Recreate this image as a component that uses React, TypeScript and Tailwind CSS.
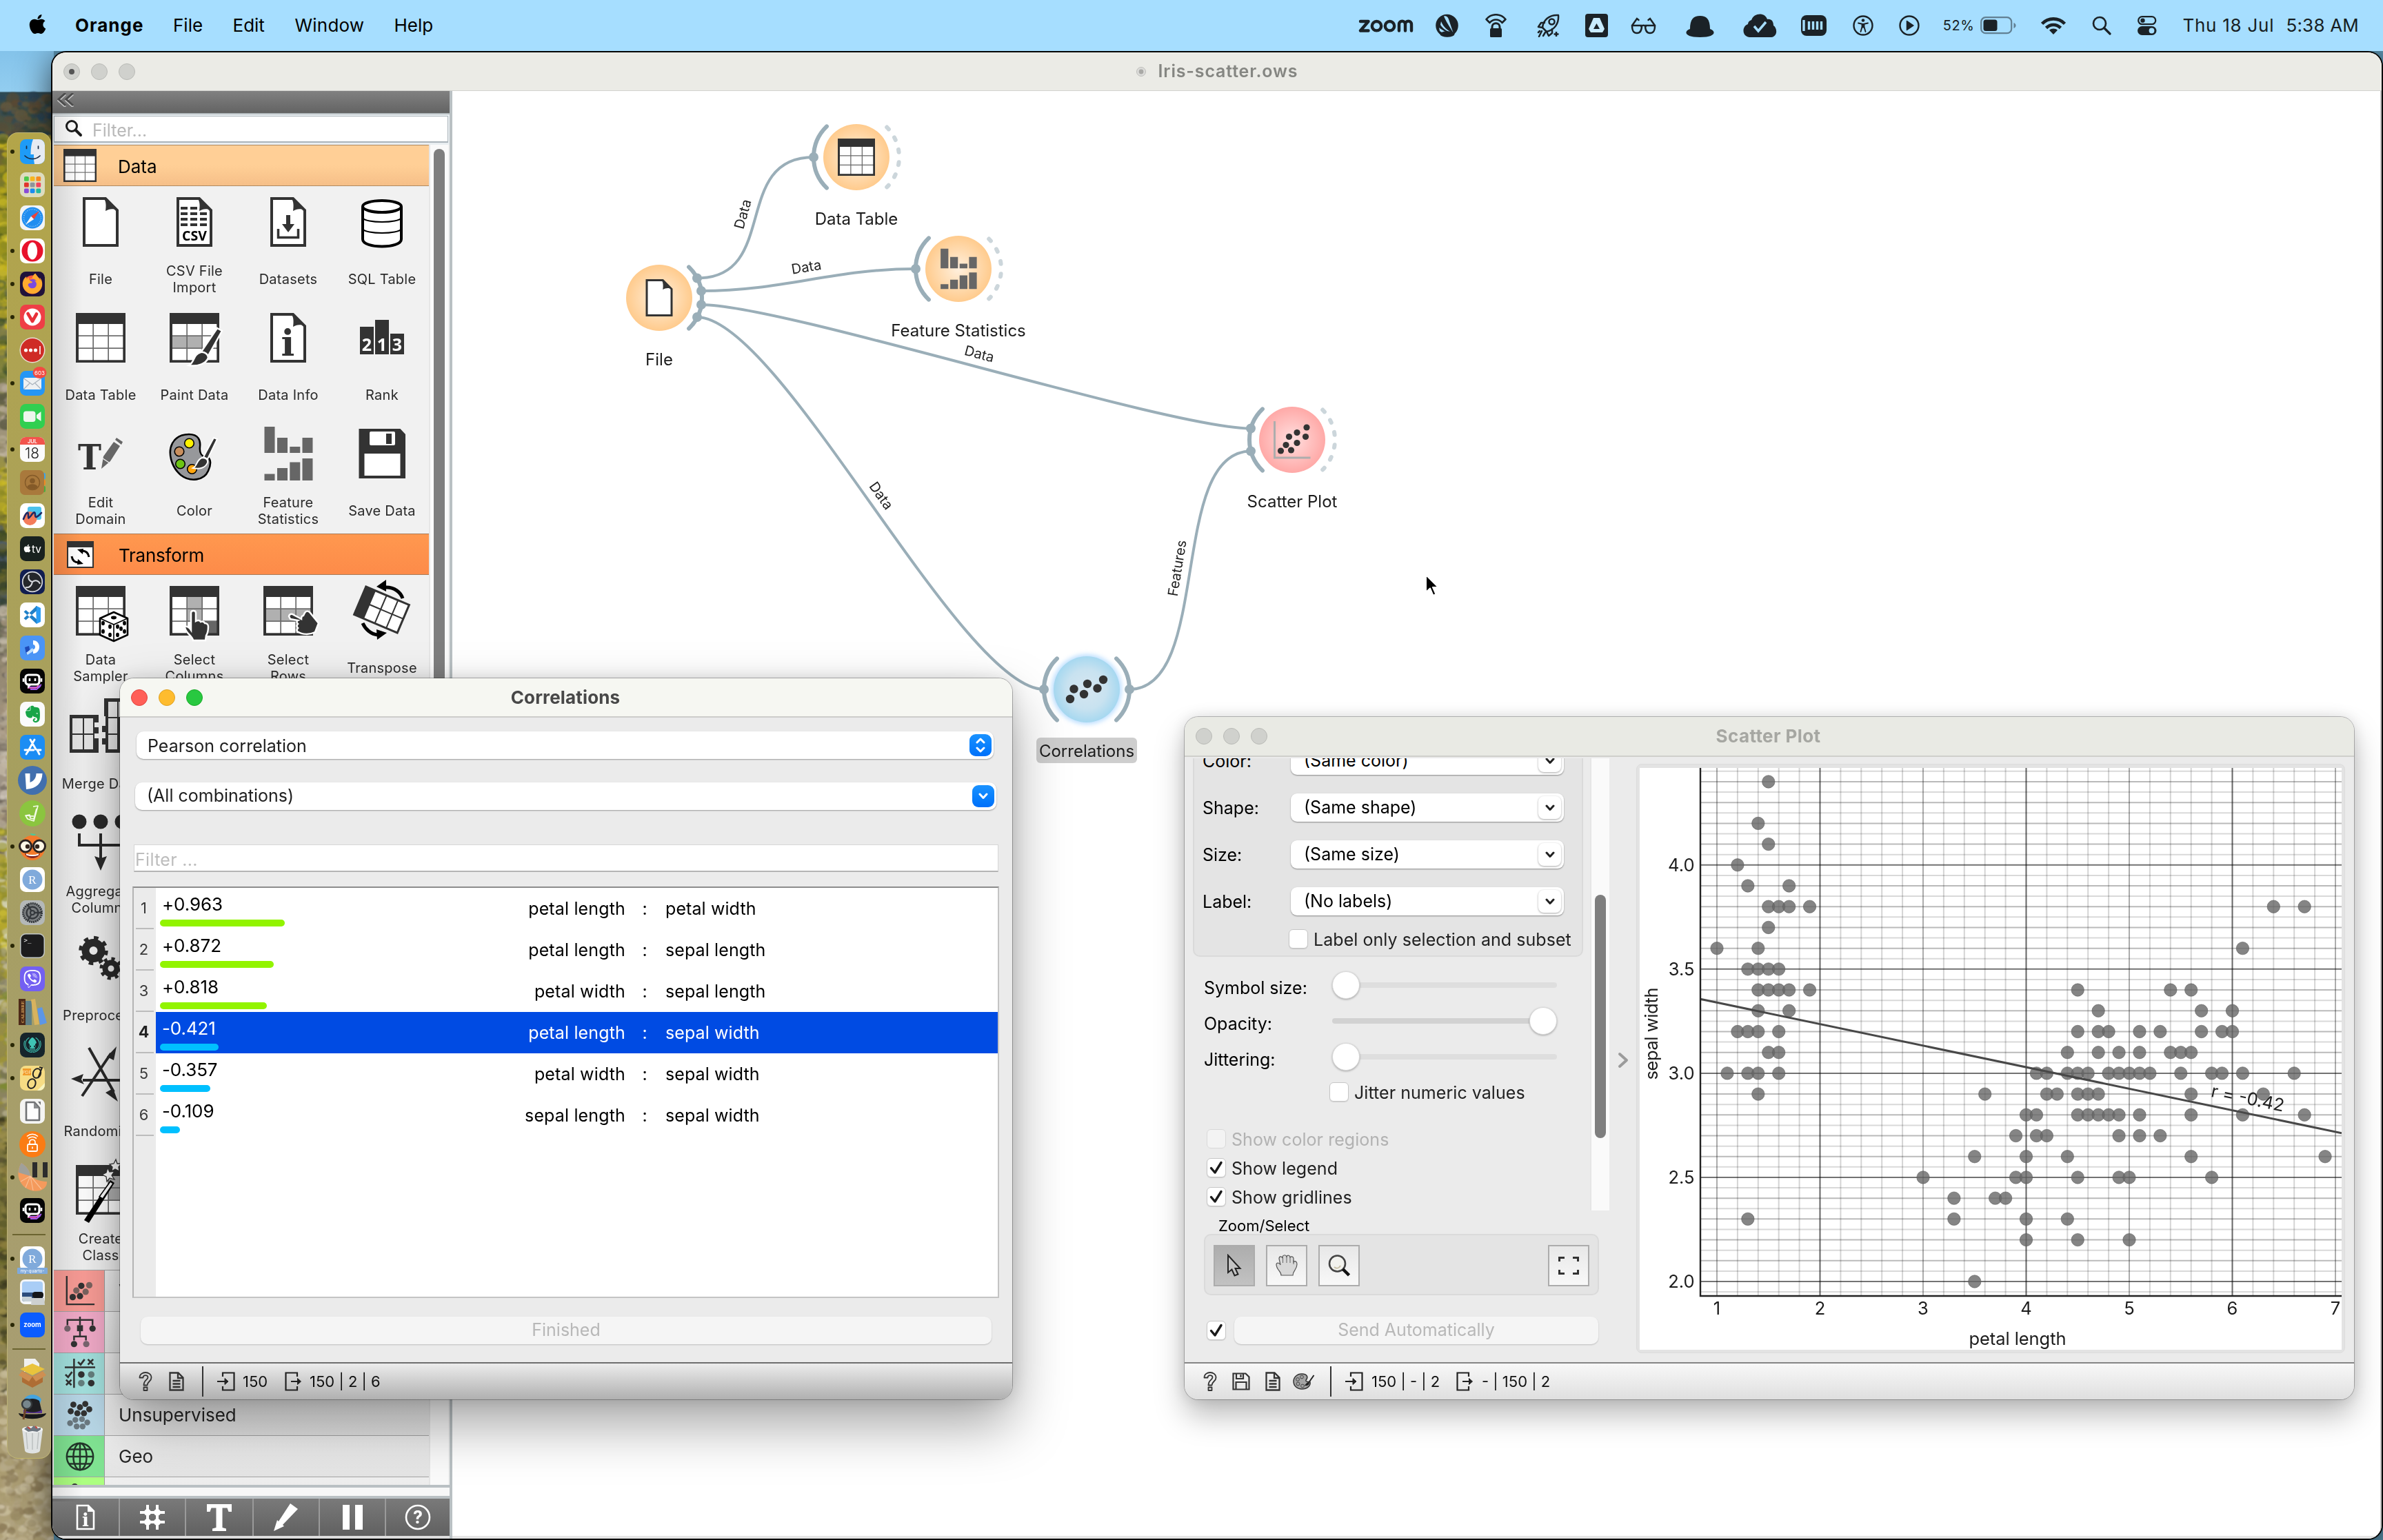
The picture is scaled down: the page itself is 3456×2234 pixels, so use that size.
import type { ReactNode } from "react";
import { FaApple, FaEvernote, FaViber, FaFirefoxBrowser, FaGitkraken } from "react-icons/fa";

const INK = "#333333";

/* ------------------------------------------------------------------ */
/* Wallpaper                                                           */
/* ------------------------------------------------------------------ */

function seeded(seed: number) {
  let s = seed;
  return () => {
    s = (s * 1664525 + 1013904223) % 4294967296;
    return s / 4294967296;
  };
}

type Band = { from: number; to: number; tones: string[] };

const bands: Band[] = [
  { from: 60, to: 130, tones: ["#3c4d3c", "#5b4a34", "#2f4038", "#6b5a3c", "#27455a"] },
  { from: 120, to: 430, tones: ["#c3b21a", "#8d8a1c", "#d6c42c", "#6b7420", "#a89c1e", "#4f5a1e"] },
  { from: 330, to: 480, tones: ["#5e6a2a", "#3d4f34", "#b5a52a", "#7c7a50"] },
  { from: 480, to: 620, tones: ["#8d8468", "#a99c8a", "#5c5a44", "#c0b4a0"] },
  { from: 600, to: 690, tones: ["#c9b824", "#8e8a22", "#6b6a2c"] },
  { from: 680, to: 820, tones: ["#2c3a30", "#3f4a24", "#4a5a70", "#6e6a2c"] },
  { from: 800, to: 1160, tones: ["#a3937c", "#8c8272", "#c2b6a4", "#6a6258", "#d0c8bc"] },
  { from: 1120, to: 1330, tones: ["#b5a82c", "#8c8a28", "#cfc034", "#dcdccc"] },
  { from: 1300, to: 1560, tones: ["#8a8468", "#a49a30", "#6d6a58", "#c4bca0", "#7e8a34"] },
  { from: 1540, to: 1960, tones: ["#6d6a28", "#8a7c3c", "#4c4c24", "#a0924c", "#77703a", "#3c3a20"] },
  { from: 1900, to: 2170, tones: ["#b4a888", "#8c7c58", "#cfc4a8", "#a89a70", "#c4b894"] },
];

function Wallpaper() {
  const rnd = seeded(41);
  const blobs: ReactNode[] = [];
  bands.forEach((b, bi) => {
    const n = Math.round((b.to - b.from) * 1.7);
    for (let i = 0; i < n; i++) {
      const r = 2 + rnd() * 8;
      blobs.push(
        <ellipse
          key={bi + "-" + i}
          cx={rnd() * 78}
          cy={b.from + 6 + rnd() * (b.to - b.from)}
          rx={r}
          ry={r * (0.4 + rnd() * 0.6)}
          fill={b.tones[Math.floor(rnd() * b.tones.length)]}
          opacity={0.35 + rnd() * 0.5}
        />,
      );
    }
  });
  return (
    <svg className="absolute left-0 top-0 h-[2160px] w-[78px]" viewBox="0 0 78 2160">
      <defs>
        <linearGradient id="wall" x1="0" y1="0" x2="0" y2="1">
          <stop offset="0" stopColor="#84c3ea" />
          <stop offset="0.027" stopColor="#92cdf0" />
          <stop offset="0.028" stopColor="#2f4a54" />
          <stop offset="0.06" stopColor="#5b5636" />
          <stop offset="0.12" stopColor="#b0a424" />
          <stop offset="0.2" stopColor="#7f8230" />
          <stop offset="0.25" stopColor="#8a8468" />
          <stop offset="0.3" stopColor="#a69c2c" />
          <stop offset="0.35" stopColor="#36422e" />
          <stop offset="0.42" stopColor="#968a74" />
          <stop offset="0.5" stopColor="#a0968a" />
          <stop offset="0.57" stopColor="#a89e30" />
          <stop offset="0.7" stopColor="#8c8450" />
          <stop offset="0.8" stopColor="#6c6830" />
          <stop offset="0.93" stopColor="#a8996c" />
          <stop offset="1" stopColor="#b0a27c" />
        </linearGradient>
        <filter id="soften">
          <feGaussianBlur stdDeviation="1.2" />
        </filter>
      </defs>
      <rect width="78" height="2160" fill="url(#wall)" />
      <g filter="url(#soften)">{blobs}</g>
    </svg>
  );
}

/* ------------------------------------------------------------------ */
/* Menu bar                                                            */
/* ------------------------------------------------------------------ */

function MenuIcon({ w, h = 34, gap, children }: { w: number; h?: number; gap: string; children: ReactNode }) {
  return (
    <svg width={w} height={h} viewBox={`0 0 ${w} ${h}`} className={"shrink-0 " + gap} fill="#1b2227">
      {children}
    </svg>
  );
}

function MenuBar() {
  return (
    <header className="flex h-[74px] items-center bg-[#a6deff] text-[26px] leading-none text-black">
      <FaApple className="mb-1 ml-[40px] h-[32px] w-[29px]" />
      <span className="ml-[40px] w-[142px] font-bold tracking-[1px]">Orange</span>
      <span className="w-[86.5px]">File</span>
      <span className="w-[90px]">Edit</span>
      <span className="w-[144px] tracking-[0.2px]">Window</span>
      <span>Help</span>
      <div className="ml-auto flex h-full items-center pr-[35px] text-[#161d22]">
        <MenuIcon w={82} gap="">
          <g fill="none" stroke="#1b2227" strokeWidth="4.400" strokeLinejoin="round" strokeLinecap="round">
            <path d="M3 11H14.500L3 24.500H14.500" />
            <circle cx="26.500" cy="17.700" r="6.700" />
            <circle cx="45.500" cy="17.700" r="6.700" />
            <path d="M59 24.500V15.500c0-6.500 9-6.500 9 0V24.500M68 15.500c0-6.500 9-6.500 9 0V24.500" />
          </g>
        </MenuIcon>
        <MenuIcon w={33} gap="ml-[30px]">
          <circle cx="16.500" cy="17" r="16.300" />
          <path d="M12 3.500c4-1 6.500 2 7.500 6l6 18C20 18 15 11 12 3.500zM8 11c3 8 9 13 17 17C17 26 11 22 7 16zM5 20c5 4 10 7 19 9-8 1-14-1-18-4z" fill="#a6deff" />
          <ellipse cx="17" cy="29.500" rx="10.500" ry="4.300" />
        </MenuIcon>
        <MenuIcon w={31} gap="ml-[39px]">
          <g fill="none" stroke="#1b2227" strokeWidth="2.600" strokeLinejoin="round">
            <path d="M1.500 8C9-1 22-1 29.500 8L24.500 13C19.500 7 11.500 7 6.500 13z" />
            <path d="M10 23v-4c0-7 11-7 11 0v4" strokeWidth="3" />
          </g>
          <rect x="7" y="21" width="17" height="13" rx="1.500" />
        </MenuIcon>
        <MenuIcon w={34} gap="ml-[44px]">
          <g fill="none" stroke="#1b2227" strokeWidth="2.500" strokeLinejoin="round" strokeLinecap="round">
            <path d="M8 20C9 9 18 1 31 2c1 12-5 21-17 24z" />
            <circle cx="21.500" cy="11.500" r="4" />
            <path d="M11 13H6L2 19l6 1M14 26l3 6 5-4v-6M7 25l-4 8M12 27l-3 5M2 27l2-2" />
            <path d="M28 26v7M24.500 29.500h7" strokeLinecap="butt" />
          </g>
        </MenuIcon>
        <MenuIcon w={33} gap="ml-[36px]">
          <rect width="33" height="34" rx="4" />
          <path d="M12 6h9l7 16-3 5H8l-3-5z" fill="#c9ecff" />
          <path d="M16.500 14l4.500 8h-9z" />
        </MenuIcon>
        <MenuIcon w={37} gap="ml-[33px]">
          <g fill="none" stroke="#1b2227" strokeWidth="2.500" strokeLinecap="round">
            <path d="M2 17L9 7l2.500 2M35 17L28 7l-2.500 2M2 17h13M22 17h13M15 18q3.500-2.500 7 0" />
            <path d="M2 17c0 8 2 11 7 11s7-4 7-11M35 17c0 8-2 11-7 11s-7-4-7-11" />
          </g>
        </MenuIcon>
        <MenuIcon w={43} gap="ml-[42px]">
          <path d="M7 22C7 8 12 3 21.500 3S36 8 36 22c9 3 9 12-14.500 12S-2 25 7 22z" />
        </MenuIcon>
        <MenuIcon w={49} gap="ml-[41px]">
          <path d="M12 9C16-2 32-2 35 8c6-1 9 3 9 9 6 4 6 16-3 17H9C-2 33-2 18 7 15c0-3 2-5 5-6z" />
          <path d="M16 18l6 7L33 12" fill="none" stroke="#a6deff" strokeWidth="3.500" />
        </MenuIcon>
        <MenuIcon w={37} gap="ml-[35px]">
          <rect y="2" width="37" height="30" rx="8" />
          <path d="M4 9v16M11.500 11v12M17.500 11v12M23.500 11v12M29.500 11v12" stroke="#a6deff" strokeWidth="3.400" />
        </MenuIcon>
        <MenuIcon w={30} h={30} gap="ml-[38px]">
          <circle cx="15" cy="15" r="13.500" fill="none" stroke="#1b2227" strokeWidth="2.400" />
          <circle cx="15" cy="7.500" r="2.300" />
          <path d="M8 11.500l5.500 1.200V17l-2 7M22 11.500l-5.500 1.200V17l2 7" fill="none" stroke="#1b2227" strokeWidth="1.900" strokeLinecap="round" strokeLinejoin="round" />
          <path d="M13 12h4v6.500h-4z" />
        </MenuIcon>
        <MenuIcon w={30} h={30} gap="ml-[37px]">
          <circle cx="15" cy="15" r="13.500" fill="none" stroke="#1b2227" strokeWidth="2.400" />
          <path d="M11.500 8.500L21 15l-9.500 6.500z" stroke="#1b2227" strokeWidth="1.500" strokeLinejoin="round" />
        </MenuIcon>
        <span className="ml-[34px] text-[20px] tracking-[0.6px]">52%</span>
        <MenuIcon w={52} h={26} gap="ml-[9px]">
          <rect x="1.200" y="1.200" width="44" height="23" rx="6.500" fill="none" stroke="#1b2227" strokeOpacity=".5" strokeWidth="2.200" />
          <rect x="4.500" y="4.500" width="20" height="16.500" rx="3.500" />
          <path d="M48.500 9c4 1.500 4 6.500 0 8z" fillOpacity=".5" />
        </MenuIcon>
        <MenuIcon w={36} h={27} gap="ml-[36px]">
          <g fill="none" stroke="#1b2227" strokeWidth="4.600">
            <path d="M1.500 10.500C10.500 1 25.500 1 34.500 10.500" />
            <path d="M7.500 16.500C13.500 10.500 22.500 10.500 28.500 16.500" />
          </g>
          <path d="M18 26l-6-6.200c3.400-3.200 8.600-3.200 12 0z" />
        </MenuIcon>
        <MenuIcon w={28} h={28} gap="ml-[38px]">
          <circle cx="11" cy="11" r="9" fill="none" stroke="#1b2227" strokeWidth="2.700" />
          <path d="M17.500 17.500L26 26" stroke="#1b2227" strokeWidth="3.200" strokeLinecap="round" />
        </MenuIcon>
        <MenuIcon w={28} h={28} gap="ml-[38px]">
          <rect x="1.200" y="1.200" width="25" height="11" rx="5.500" fill="none" stroke="#1b2227" strokeWidth="2.300" />
          <circle cx="7.500" cy="6.700" r="3.200" />
          <rect x="0" y="15" width="27.500" height="13" rx="6.500" />
          <circle cx="20.500" cy="21.500" r="3.900" fill="#a6deff" />
        </MenuIcon>
        <span className="ml-[37px] w-[150px] tracking-[0.75px]">Thu 18 Jul</span>
        <span className="tracking-[0.2px] whitespace-nowrap">5:38 AM</span>
      </div>
    </header>
  );
}

/* ------------------------------------------------------------------ */
/* Dock                                                                */
/* ------------------------------------------------------------------ */

type DockApp = { id: string; dot?: boolean; art: ReactNode };

const Tile = ({ fill }: { fill: string }) => <rect width="36" height="36" rx="8.500" fill={fill} />;

const botArt = (
  <>
    <Tile fill="#050505" />
    <path d="M12 27h14l5-4M15 30h9l6-5" stroke="#a45bf0" strokeWidth="2" fill="none" />
    <path d="M11 28h12l4-4" stroke="#f45bb8" strokeWidth="1.500" fill="none" />
    <rect x="8" y="9" width="20" height="14" rx="4" fill="none" stroke="#fff" strokeWidth="3.200" />
    <path d="M5 14v5M31 14v5M14 14v4M22 14v4" stroke="#fff" strokeWidth="2.600" />
    <path d="M11 22v7l6-6" fill="#fff" />
  </>
);

const dockTop: DockApp[] = [
  {
    id: "finder", dot: true,
    art: (
      <>
        <Tile fill="#1e9bf7" />
        <path d="M19 0h8.500A8.500 8.500 0 0 1 36 8.500v19a8.500 8.500 0 0 1-8.500 8.500H21c-1-5-1-9-1-14h-4.500C15.500 13 16.500 6 19 0z" fill="#e6ebf2" />
        <path d="M9.500 10v3.500M26.500 10v3.500M7 24c6 6 16 6 22 0" stroke="#1b2c44" strokeWidth="1.700" fill="none" strokeLinecap="round" />
      </>
    ),
  },
  {
    id: "launchpad",
    art: (
      <>
        <Tile fill="#dddcc0" />
        {["#4cc84a", "#f6b61e", "#f58b1f", "#e0342c", "#8e949a", "#f2455e", "#8a4ad8", "#1a8bf2", "#23b8a0"].map((c, i) => (
          <rect key={c} x={6 + (i % 3) * 8.7} y={6 + Math.floor(i / 3) * 8.7} width="6.800" height="6.800" rx="1.600" fill={c} />
        ))}
      </>
    ),
  },
  {
    id: "safari",
    art: (
      <>
        <Tile fill="#f2f4f6" />
        <circle cx="18" cy="18" r="15.500" fill="#1f8df0" />
        <circle cx="18" cy="18" r="12.500" fill="none" stroke="#8cc6fa" strokeWidth="1.600" strokeDasharray="1 1.800" />
        <path d="M28 8L16 15.800 20.200 20z" fill="#ee4136" />
        <path d="M8 28l12.200-8L16 15.800z" fill="#f4f6f8" />
      </>
    ),
  },
  {
    id: "opera", dot: true,
    art: (
      <>
        <Tile fill="#ffffff" />
        <ellipse cx="18" cy="18" rx="15.500" ry="15.500" fill="#e8122c" />
        <ellipse cx="18" cy="18" rx="7.200" ry="12.500" fill="#fff" />
      </>
    ),
  },
  {
    id: "firefox", dot: true,
    art: (
      <>
        <Tile fill="#20123a" />
        <circle cx="18" cy="19" r="13.500" fill="#ff5a3c" />
        <circle cx="18.500" cy="18" r="7" fill="#7a4be0" />
        <FaFirefoxBrowser x={3} y={2.5} size={30} color="#ffab2e" />
      </>
    ),
  },
  {
    id: "vivaldi", dot: true,
    art: (
      <>
        <Tile fill="#ef3e46" />
        <circle cx="18" cy="18" r="12.500" fill="#fff" />
        <path d="M11.500 13l6.500 11 6-10.500" fill="none" stroke="#e83038" strokeWidth="4.600" strokeLinecap="round" strokeLinejoin="round" />
      </>
    ),
  },
  {
    id: "passwords",
    art: (
      <>
        <circle cx="18" cy="18" r="18.500" fill="#e8dcd4" />
        <circle cx="18" cy="18" r="17" fill="#cf2b26" />
        <circle cx="8.500" cy="18" r="2.600" fill="#fff" />
        <circle cx="15.500" cy="18" r="2.600" fill="#fff" />
        <circle cx="22.500" cy="18" r="2.600" fill="#fff" />
        <path d="M29 12v12" stroke="#fff" strokeWidth="1.600" />
      </>
    ),
  },
  {
    id: "mail", dot: true,
    art: (
      <>
        <Tile fill="#2596f5" />
        <rect x="5" y="10" width="26" height="17" rx="2.500" fill="#eef0f2" />
        <path d="M5.500 11l12.500 9 12.500-9M5.500 26.500L14 18M30.500 26.500L22 18" stroke="#a9b2bc" strokeWidth="1.200" fill="none" />
        <ellipse cx="28.500" cy="2.500" rx="10" ry="8.500" fill="#f24a42" />
        <text x="28.500" y="5.500" fontSize="8" textAnchor="middle" fill="#fff">603</text>
      </>
    ),
  },
  {
    id: "facetime",
    art: (
      <>
        <Tile fill="#30cf50" />
        <rect x="5" y="10.500" width="17.500" height="15.500" rx="4" fill="#eef6ee" />
        <path d="M24 16l6.500-5v14L24 20.500z" fill="#eef6ee" />
      </>
    ),
  },
  {
    id: "calendar", dot: true,
    art: (
      <>
        <Tile fill="#fbfbfb" />
        <path d="M0 11V8.500A8.500 8.500 0 0 1 8.500 0h19A8.500 8.500 0 0 1 36 8.500V11z" fill="#f2544c" />
        <text x="18" y="8.800" fontSize="7.500" fontWeight="600" textAnchor="middle" fill="#fff">JUL</text>
        <text x="17.500" y="30.500" fontSize="21" fontWeight="300" textAnchor="middle" fill="#222">18</text>
      </>
    ),
  },
  {
    id: "contacts",
    art: (
      <>
        <rect x="30" y="4" width="7" height="9" rx="2" fill="#3ea4e8" />
        <rect x="30" y="14" width="7" height="8" rx="2" fill="#f08a24" />
        <rect x="30" y="23" width="7" height="9" rx="2" fill="#4aae40" />
        <rect width="35" height="36" rx="7" fill="#a9793c" />
        <circle cx="18" cy="18" r="10.500" fill="none" stroke="#845a28" strokeWidth="1.400" />
        <circle cx="18" cy="15.500" r="3.800" fill="#845a28" />
        <path d="M10.500 24c2-5 13-5 15 0-3 5-12 5-15 0z" fill="#845a28" />
      </>
    ),
  },
  {
    id: "freeform",
    art: (
      <>
        <Tile fill="#ffffff" />
        <rect x="11" y="5" width="20" height="19" rx="3" fill="#4bc2ec" />
        <circle cx="14.500" cy="22" r="10" fill="#f47c5a" />
        <path d="M5 23c4-10 7-12 7-6 0 6 0 6 4 1 4-6 6-6 6-1 0 6 4 2 9-3" stroke="#1c2a66" strokeWidth="2.600" fill="none" strokeLinecap="round" />
      </>
    ),
  },
  {
    id: "tv",
    art: (
      <>
        <Tile fill="#18211f" />
        <FaApple x={4} y={11} size={13} color="#fff" />
        <text x="24" y="23.500" fontSize="15.500" textAnchor="middle" fill="#fff">tv</text>
      </>
    ),
  },
  {
    id: "obs",
    art: (
      <>
        <Tile fill="#121e50" />
        <circle cx="18" cy="18" r="14.300" fill="#25272b" stroke="#d8dadf" strokeWidth="1.700" />
        <path d="M13 8c-2 6 1 9 5 10 4-3 9-2 11 3M18 18c-1 5-4 9-10 8" stroke="#d8dadf" strokeWidth="2" fill="none" />
      </>
    ),
  },
  {
    id: "code",
    art: (
      <>
        <Tile fill="#ffffff" />
        <path d="M24 5l6 3v20l-6 3-1-26z" fill="#2a9df4" />
        <path d="M5.500 13.500l3-2.500L24 24v7zM5.500 23l3 2.500L24 12V5z" fill="#1f80c8" />
      </>
    ),
  },
  {
    id: "proxy",
    art: (
      <>
        <Tile fill="#4a94f6" />
        <path d="M19 7c12 0 12 19 0 19v-6c4 0 4-7 0-7z" fill="#fff" />
        <path d="M7 17l6-2 2 9-6 3z" fill="#1d49b8" />
        <path d="M9 25l9-7 2 4-9 6z" fill="#bfe0ff" />
      </>
    ),
  },
  { id: "bot", art: botArt },
  {
    id: "evernote",
    art: (
      <>
        <Tile fill="#fbfbfb" />
        <FaEvernote x={4.5} y={4} size={28} color="#18a548" />
      </>
    ),
  },
  {
    id: "appstore",
    art: (
      <>
        <Tile fill="#1c8df4" />
        <path d="M15 7l8 14M21 7L11 25M7 22h13M25 22h5M25 22l3 6M9 28l1.500-2.500" stroke="#fff" strokeWidth="2.800" strokeLinecap="round" />
      </>
    ),
  },
  {
    id: "vectors",
    art: (
      <>
        <circle cx="18" cy="18" r="21" fill="#416fae" />
        <path d="M7.500 8h7v13c6-2 9-7 9-13h9C32 22 24 30 9 31z" fill="#fff" />
      </>
    ),
  },
  {
    id: "journal",
    art: (
      <>
        <circle cx="18" cy="18" r="19" fill="#8bc53f" />
        <path d="M19 8l7-1-6 22-9-3-3-5 6-1 1 5 5 1 4-15M8 21l12 1" stroke="#f4fbe8" strokeWidth="1.700" fill="none" strokeLinejoin="round" />
      </>
    ),
  },
  {
    id: "orange", dot: true,
    art: (
      <>
        <path d="M14-1l9 1-3 4z" fill="#4cc89a" />
        <circle cx="18" cy="20" r="18" fill="#f37a2c" />
        <circle cx="8" cy="17.500" r="8.500" fill="#fdf7e6" stroke="#2a2220" strokeWidth="3" />
        <circle cx="28" cy="17.500" r="8.500" fill="#fdf7e6" stroke="#2a2220" strokeWidth="3" />
        <circle cx="11" cy="18" r="3.200" fill="#33251d" />
        <circle cx="25" cy="18" r="3.200" fill="#33251d" />
        <path d="M7 28c7 3 15 3 22 0-2 9-20 9-22 0z" fill="#7c2020" />
        <path d="M9 28.500c6 2 12 2 18 0v2c-6 2-12 2-18 0z" fill="#fff" />
      </>
    ),
  },
  {
    id: "rstudio",
    art: (
      <>
        <Tile fill="#ffffff" />
        <circle cx="18" cy="18" r="14.500" fill="#80aadb" />
        <text x="18" y="24" fontSize="17" textAnchor="middle" fill="#fff" fontFamily="Liberation Serif, serif">R</text>
      </>
    ),
  },
  {
    id: "settings",
    art: (
      <>
        <Tile fill="#b4b8b8" />
        <circle cx="18" cy="18" r="13.500" fill="#7a7e80" stroke="#303438" strokeWidth="3" strokeDasharray="2 1" />
        <circle cx="18" cy="18" r="8.500" fill="none" stroke="#34383c" strokeWidth="2.400" />
        <path d="M18 18h14M18 18l-7 12M18 18L11 6" stroke="#34383c" strokeWidth="2.400" />
        <circle cx="18" cy="18" r="3" fill="#7a7e80" stroke="#34383c" strokeWidth="2" />
      </>
    ),
  },
  {
    id: "terminal", dot: true,
    art: (
      <>
        <Tile fill="#c3c8c6" />
        <rect x="1.500" y="1.500" width="33" height="33" rx="7" fill="#1c1c1d" />
        <text x="5.500" y="13" fontSize="9" fill="#eee" fontFamily="DejaVu Sans Mono, monospace">&gt;_</text>
      </>
    ),
  },
  {
    id: "viber",
    art: (
      <>
        <Tile fill="#7360f2" />
        <FaViber x={5} y={5} size={26} color="#fff" />
      </>
    ),
  },
  {
    id: "calibre",
    art: (
      <>
        <rect x="-2" y="-1" width="10" height="38" fill="#4d2a18" />
        <rect x="8" y="2" width="9" height="35" fill="#5f7f86" />
        <path d="M16 0l6-1 6 37-7 1z" fill="#d8b35e" />
        <path d="M25 13l7-2 7 23-10 3z" fill="#5d96e6" />
        <text transform="translate(5.500 34) rotate(-90)" fontSize="7" fontWeight="700" fill="#d9a45c" fontFamily="Liberation Serif, serif">CALIBRE</text>
      </>
    ),
  },
  {
    id: "kraken", dot: true,
    art: (
      <>
        <Tile fill="#16242b" />
        <FaGitkraken x={5} y={5} size={26} color="#3fc4b4" />
      </>
    ),
  },
  {
    id: "pdf", dot: true,
    art: (
      <>
        <Tile fill="#f6dc84" />
        <rect x="4" y="4" width="12" height="10" fill="#f29c2c" />
        <text x="10" y="12" fontSize="6.500" textAnchor="middle" fill="#fce8b8">PDF</text>
        <path d="M25 36l11-11v3a8 8 0 0 1-8 8z" fill="#f8f4c0" />
        <g stroke="#222" strokeWidth="2" fill="none">
          <ellipse cx="24.500" cy="11" rx="5.500" ry="7" transform="rotate(20 24.500 11)" />
          <ellipse cx="17" cy="26" rx="5.500" ry="7" transform="rotate(20 17 26)" />
          <path d="M28 2l4 1-6 15" />
        </g>
      </>
    ),
  },
  {
    id: "office",
    art: (
      <>
        <Tile fill="#f4f4f2" />
        <path d="M9 5h12l7 8v18H9z" fill="#fdfdfd" stroke="#707274" strokeWidth="2.600" strokeLinejoin="round" />
        <path d="M20 5v9h8z" fill="#8a8c8e" />
        <path d="M26 4h4v5z" fill="#707274" />
      </>
    ),
  },
  {
    id: "vpn",
    art: (
      <>
        <circle cx="18" cy="18" r="19" fill="#fb7c14" />
        <rect x="11" y="18" width="14" height="10" rx="1.500" fill="none" stroke="#fff" strokeWidth="1.800" />
        <path d="M14 18v-3c0-5 8-5 8 0v3M12 9.500c4-3 8-3 12 0M10 6.500c5-4 11-4 16 0M18 21.500v3" stroke="#fff" strokeWidth="1.600" fill="none" />
      </>
    ),
  },
  {
    id: "slice", dot: true,
    art: (
      <>
        <path d="M2-3C10 2 14 8 15 16c8 6 16 8 24 8C40 38 20 42 8 33-3 25-6 10 2-3z" fill="#f59a5c" />
        <path d="M2-3C10 2 14 8 15 16L-2 11C-2 6-1 1 2-3z" fill="#a0a09a" />
        <path d="M15 16l-14 8M15 16L8 33M15 16l4 21M15 16l16 19" stroke="#f8bf94" strokeWidth="1.200" />
        <rect x="18" y="-4" width="7" height="22" fill="#2c2c2c" />
        <rect x="33" y="-4" width="7" height="22" fill="#2c2c2c" />
      </>
    ),
  },
  { id: "bot2", art: botArt },
];

const dockMiddle: DockApp[] = [
  {
    id: "rsession", dot: true,
    art: (
      <>
        <Tile fill="#ffffff" />
        <circle cx="18" cy="18" r="14.500" fill="#80aadb" />
        <text x="18" y="24" fontSize="17" textAnchor="middle" fill="#fff" fontFamily="Liberation Serif, serif">R</text>
        <rect x="-4" y="31" width="44" height="9" rx="1" fill="#80aadb" />
        <text x="18" y="38" fontSize="6.500" textAnchor="middle" fill="#fff">my-quarto-</text>
      </>
    ),
  },
  {
    id: "preview",
    art: (
      <>
        <rect width="36" height="36" rx="7" fill="#f4f6f8" />
        <rect x="3" y="3" width="30" height="29" rx="4" fill="#a9cdf6" />
        <path d="M3 19h30v9a4 4 0 0 1-4 4H7a4 4 0 0 1-4-4z" fill="#2c4c7c" />
        <path d="M3 25h14v7H7a4 4 0 0 1-4-4z" fill="#c8d2d8" />
        <rect x="18" y="18" width="16" height="9" rx="4" fill="#14161a" />
        <path d="M17 27h18l1 10H16z" fill="#cdd0d0" />
      </>
    ),
  },
  {
    id: "zoom", dot: true,
    art: (
      <>
        <Tile fill="#0b5cff" />
        <text x="18" y="21" fontSize="9.500" fontWeight="700" textAnchor="middle" fill="#fff">zoom</text>
      </>
    ),
  },
];

const dockBottom: DockApp[] = [
  {
    id: "archive",
    art: (
      <>
        <path d="M6-3h16l6 7v12H6z" fill="#f0f0ee" />
        <path d="M0 12l18-8 18 8-18 9z" fill="#e9c33c" />
        <path d="M3 15l15 8v16L3 31zM33 15l-15 8v16l15-8z" fill="#ae6d34" />
        <path d="M3 15l15 8-5 7L-2 21zM33 15l-15 8 5 7 15-9z" fill="#cf8f52" />
      </>
    ),
  },
  {
    id: "hat",
    art: (
      <>
        <path d="M6 8c4-9 20-9 25 0l-2 6H8z" fill="#45a4e0" />
        <path d="M8 10c6-4 14-4 20 0l4 17H5z" fill="#1f1f22" />
        <path d="M5 23c8 5 19 5 27 0v5H5z" fill="#553290" />
        <path d="M-2 28c6 2 34 2 40 0-2 11-38 11-40 0z" fill="#17171a" />
        <circle cx="10" cy="15" r="7" fill="#77868c" stroke="#34383a" strokeWidth="2.400" />
        <path d="M8 22L5 37" stroke="#6d4428" strokeWidth="3" />
      </>
    ),
  },
  {
    id: "trash",
    art: (
      <>
        <path d="M3 3l4 31c0 6 22 6 22 0L33 3z" fill="#dfe2e2" />
        <path d="M9 8l2 24M18 9v24M27 8l-2 24" stroke="#bcc0c0" strokeWidth="1.500" />
        <ellipse cx="18" cy="3.500" rx="15" ry="4.500" fill="#f4f5f5" />
        <path d="M6 3l5-4 5 3 4-4 5 4 5-1v3l-5 3-7-1-6 1z" fill="#6d7680" />
        <path d="M11 0l4 3M22-1l3 3" stroke="#c84a40" strokeWidth="2" />
      </>
    ),
  },
];

function DockGroup({ apps }: { apps: DockApp[] }) {
  return (
    <>
      {apps.map((a) => (
        <div key={a.id} className="flex h-12 shrink-0 items-center">
          <span className={a.dot ? "ml-1 size-[6px] rounded-full bg-[#2a2806]" : "ml-1 size-[6px]"} />
          <svg className="ml-[8px] size-9 overflow-visible" viewBox="0 0 36 36">
            {a.art}
          </svg>
        </div>
      ))}
    </>
  );
}

function Dock() {
  return (
    <nav className="absolute left-[10px] top-[118px] flex h-[1924px] w-[64px] flex-col rounded-[16px] border border-[#c9c07a]/60 bg-linear-to-b from-[#b3a549] via-[#a69f60] to-[#a89d74] pt-[3px]">
      <DockGroup apps={dockTop} />
      <div className="flex h-[22px] shrink-0 items-center px-[7px]">
        <div className="h-[2px] w-full bg-[#6b6430]" />
      </div>
      <DockGroup apps={dockMiddle} />
      <div className="flex h-[22px] shrink-0 items-center px-[7px]">
        <div className="h-[2px] w-full bg-[#6b6430]" />
      </div>
      <DockGroup apps={dockBottom} />
    </nav>
  );
}

/* ------------------------------------------------------------------ */
/* Widget icons (72 x 72 box)                                          */
/* ------------------------------------------------------------------ */

function TableArt({ shade, dark }: { shade?: number[]; dark?: number[] }) {
  const xs = [4, 26, 48];
  const ys = [16, 34, 52];
  return (
    <>
      <rect width="72" height="72" fill={INK} />
      <rect x="4" y="16" width="64" height="52" fill="#6a6a6a" />
      {ys.map((y, r) =>
        xs.map((x, c) => {
          const i = r * 3 + c;
          const fill = shade?.includes(i) ? "#b0b0b0" : dark?.includes(i) ? "#666666" : "#ffffff";
          return <rect key={i} x={x} y={y} width="20.300" height="16.300" fill={fill} />;
        }),
      )}
    </>
  );
}

const PageArt = () => (
  <>
    <path d="M12 2H43L60 19V70H12z" fill="#fff" stroke={INK} strokeWidth="4" />
    <path d="M41 2l20 17c-8-3-13-2-18 1 1-7 1-13-2-18z" fill={INK} />
  </>
);

const Brush = () => (
  <g fill={INK} stroke="#fff" strokeWidth="2.500">
    <path d="M69 22L76 26 56 62 46 56z" />
    <path d="M45 57c6-1 11 3 11 8-3 9-16 13-28 11 8-4 6-16 17-19z" />
  </g>
);

const StatBars = () => (
  <g fill="#666666">
    <path d="M1.500-3h15v38h-15zM20 13h15v22H20zM38.300 26h15v9h-15zM56.500 13h15v22h-15z" />
    <path d="M1.500 65.500h15V75h-15zM20 57h15v18H20zM38.300 48.500h15V75h-15zM56.500 43h15v32h-15z" />
  </g>
);

const icons: Record<string, ReactNode> = {
  file: <PageArt />,
  csv: (
    <>
      <PageArt />
      <path d="M16 16h10M30 16h10M16 24h10M30 24h10M44 24h10M16 32h10M30 32h10M44 32h10M16 40h10M30 40h10M44 40h10" stroke={INK} strokeWidth="4.200" />
      <text x="36" y="63" fontSize="19.500" fontWeight="700" textAnchor="middle" fill="#000" fontFamily="Open Sans, sans-serif">CSV</text>
    </>
  ),
  datasets: (
    <>
      <PageArt />
      <path d="M33 26h6v13h6l-9 12-9-12h6z" fill={INK} />
      <path d="M21.500 46v12.500h29V46" fill="none" stroke={INK} strokeWidth="3.500" />
    </>
  ),
  sql: (
    <g fill="#fff" stroke="#000" strokeWidth="4">
      <path d="M8 14v47c0 14 56 14 56 0V14" />
      <path d="M8 30c4 8 52 8 56 0M8 46c4 8 52 8 56 0" fill="none" strokeWidth="2" />
      <ellipse cx="36" cy="13.500" rx="28" ry="8.500" />
    </g>
  ),
  table: <TableArt />,
  paint: (
    <>
      <TableArt shade={[3, 4]} />
      <Brush />
    </>
  ),
  info: (
    <>
      <PageArt />
      <text x="35.500" y="62" fontSize="52" fontWeight="700" textAnchor="middle" fill={INK} fontFamily="DejaVu Serif, serif">i</text>
    </>
  ),
  rank: (
    <>
      <path d="M4 20h20v40H4zM26 10h20v50H26zM48 30h20v30H48z" fill={INK} />
      <g fill="#fff" fontSize="25" fontWeight="700" textAnchor="middle" fontFamily="Open Sans, sans-serif">
        <text x="14" y="55">2</text>
        <text x="36" y="55">1</text>
        <text x="58" y="55">3</text>
      </g>
    </>
  ),
  domain: (
    <>
      <text x="20" y="59" fontSize="51" fontWeight="700" textAnchor="middle" fill={INK} fontFamily="DejaVu Serif, serif" textLength="34" lengthAdjust="spacingAndGlyphs">T</text>
      <path d="M40 40l15-21 9 6-14 22-13 11z" fill="#666" />
      <path d="M57 16l2-3 9 6-2 4z" fill="#666" />
      <path d="M39 43l9 6" stroke="#f1f1f1" strokeWidth="1.500" />
    </>
  ),
  color: (
    <>
      <path d="M28 8c14 0 17 9 16 18-1 10 2 14 9 15 8 1 7 12 3 20-6 14-26 17-40 6C2 55-3 34 4 21 9 12 18 8 28 8z" fill="#97989b" stroke="#000" strokeWidth="2.600" />
      <g stroke="#000" strokeWidth="1.600">
        <circle cx="28.500" cy="21" r="6.800" fill="#fff200" />
        <circle cx="14" cy="33" r="6.800" fill="#c98f5e" />
        <circle cx="15.500" cy="51" r="6.800" fill="#6cc414" />
        <circle cx="32.500" cy="58.500" r="6.800" fill="#ffa60f" />
      </g>
      <path d="M64 13l5 2-14 29-6-3z" fill={INK} stroke="#fff" strokeWidth="2" />
      <path d="M47 42c6 0 9 3 8 7-3 8-12 10-21 8 6-3 5-12 13-15z" fill={INK} stroke="#fff" strokeWidth="2" />
    </>
  ),
  stats: <StatBars />,
  save: (
    <>
      <path d="M2.500 0h60l7.500 8v64H2.500z" fill={INK} />
      <rect x="18" y="4" width="37" height="20" rx="2" fill="#fff" />
      <rect x="42" y="7" width="8" height="15" fill={INK} />
      <rect x="10.500" y="36" width="52" height="32" fill="#fff" />
    </>
  ),
  sampler: (
    <>
      <TableArt />
      <path d="M55 38l20 9v24l-20 9-20-9V47z" fill="#fff" stroke="#000" strokeWidth="2.600" strokeLinejoin="round" />
      <path d="M35 47l20 9 20-9M55 56v24" fill="none" stroke="#000" strokeWidth="1.600" />
      <g fill="#000">
        <ellipse cx="55" cy="46" rx="4" ry="2.400" />
        <ellipse cx="39.500" cy="54" rx="2.400" ry="3.200" />
        <ellipse cx="49.500" cy="59" rx="2.400" ry="3.200" />
        <ellipse cx="39.500" cy="66" rx="2.400" ry="3.200" />
        <ellipse cx="49.500" cy="71" rx="2.400" ry="3.200" />
        <ellipse cx="70.500" cy="54" rx="2.400" ry="3.200" />
        <ellipse cx="60.500" cy="59" rx="2.400" ry="3.200" />
        <ellipse cx="65.500" cy="62" rx="2.400" ry="3.200" />
        <ellipse cx="70.500" cy="66" rx="2.400" ry="3.200" />
        <ellipse cx="60.500" cy="71" rx="2.400" ry="3.200" />
      </g>
    </>
  ),
  columns: (
    <>
      <TableArt shade={[1, 4]} dark={[8]} />
      <path d="M31 39c0-4 7-4 7 0v12c3-2 6-1 7 1 3-1 5 0 6 2 3 0 5 2 5 5 0 6-1 10-3 13l-1 7H34c-1-7-12-11-12-20 4-1 7 2 9 5z" fill={INK} stroke="#fff" strokeWidth="2.500" />
    </>
  ),
  rows: (
    <>
      <TableArt shade={[3, 4, 5]} />
      <path d="M37 44c1-4 5-4 7-2l11 6c0-3 1-5 3-5l2-4c2-3 4-3 7-1l13 16-5 13c-8 4-18 4-26-1-1-2 0-4 1-5-2-2-2-4 0-6-2-2-2-4 0-5L39 48z" fill={INK} stroke="#fff" strokeWidth="2.500" />
    </>
  ),
  transpose: (
    <>
      <g transform="translate(12 -1) rotate(23)">
        <rect width="71" height="47" fill={INK} />
        <g fill="#fff">
          {[17, 35, 53].map((x) => [3, 24.5].map((y) => <rect key={x + "-" + y} x={x} y={y} width={x === 53 ? 15 : 16} height="19.500" />))}
        </g>
      </g>
      <path d="M66 17C63 8 54 1 42 1" fill="none" stroke="#000" strokeWidth="5" transform="translate(0 1)" />
      <path d="M28 1L42-9v17z" fill="#000" />
      <path d="M8 54c4 9 12 16 22 17" fill="none" stroke="#000" strokeWidth="5" />
      <path d="M43 68L29 78l-1-15z" fill="#000" />
    </>
  ),
  merge: (
    <g transform="translate(-11 -3)">
      <path d="M2 22h42v11h-6v7h6v9h-6v7h6v9h-6v12H2zM38 22h6v0z" fill={INK} />
      <path d="M36 65h8v12h-8z" fill={INK} />
      <path d="M6 27h15v22H6zM23 27h13v22H23zM6 51h15v21H6zM23 51h13v21H23z" fill="#e6e6e6" />
      <path d="M52-2h40v79H54V65h-5v-9h5V47h-5v-9h5V24h-2z" fill={INK} />
      <path d="M58 3h13v22H58zM58 27h13v22H58zM58 51h13v21H58zM73 3h13v22H73z" fill="#e6e6e6" />
    </g>
  ),
  aggregate: (
    <>
      <g fill="#2a2a2a">
        <circle cx="5" cy="6" r="10.500" />
        <circle cx="36" cy="6" r="10.500" />
        <circle cx="67" cy="6" r="10.500" />
        <path d="M36 77L27 56l9 3 9-3z" />
      </g>
      <path d="M5 23v17h62V23M36 23v38" fill="none" stroke="#2a2a2a" strokeWidth="4" />
    </>
  ),
  preprocess: (
    <g fill="none" stroke="#2a2a2a">
      <circle cx="25.500" cy="25" r="11.500" strokeWidth="11" />
      <circle cx="25.500" cy="25" r="18.500" strokeWidth="5.500" strokeDasharray="6.500 8.030" />
      <circle cx="51" cy="51" r="8.500" strokeWidth="8" />
      <circle cx="51" cy="51" r="14" strokeWidth="5" strokeDasharray="5 6" />
    </g>
  ),
  randomize: (
    <>
      <path d="M19-2L55 62M9 68L51 6M70 45H10" fill="none" stroke="#2a2a2a" strokeWidth="4" />
      <path d="M59-4L45 11l10 5zM61 76L43 63l11-6zM-7 43l18-7-3 8 4 7z" fill="#2a2a2a" />
    </>
  ),
  klass: (
    <>
      <TableArt shade={[2, 5]} />
      <path d="M12 80L50 22l6 4L19 84z" fill="#000" />
      <path d="M34 46l16-22 4 3-15 22z" fill="#fff" stroke="#000" strokeWidth="1.500" />
      <path d="M46 4l3 6 7-1-4 6 4 6-7-2-4 5-1-7-6-3 6-3zM58-8l2 6 6 0-4 5 1 6-6-3-5 3 1-6-4-4 6-1z" fill="#fff" stroke="#333" strokeWidth="1.300" />
    </>
  ),
};

/* ------------------------------------------------------------------ */
/* Tool box                                                            */
/* ------------------------------------------------------------------ */

type Widget = { icon: string; label: string[] };

const dataWidgets: Widget[] = [
  { icon: "file", label: ["File"] },
  { icon: "csv", label: ["CSV File", "Import"] },
  { icon: "datasets", label: ["Datasets"] },
  { icon: "sql", label: ["SQL Table"] },
  { icon: "table", label: ["Data Table"] },
  { icon: "paint", label: ["Paint Data"] },
  { icon: "info", label: ["Data Info"] },
  { icon: "rank", label: ["Rank"] },
  { icon: "domain", label: ["Edit", "Domain"] },
  { icon: "color", label: ["Color"] },
  { icon: "stats", label: ["Feature", "Statistics"] },
  { icon: "save", label: ["Save Data"] },
];

const transformWidgets: Widget[] = [
  { icon: "sampler", label: ["Data", "Sampler"] },
  { icon: "columns", label: ["Select", "Columns"] },
  { icon: "rows", label: ["Select", "Rows"] },
  { icon: "transpose", label: ["Transpose"] },
];

const transformColumn: Widget[] = [
  { icon: "merge", label: ["Merge Data"] },
  { icon: "aggregate", label: ["Aggregate", "Columns"] },
  { icon: "preprocess", label: ["Preprocess"] },
  { icon: "randomize", label: ["Randomize"] },
  { icon: "klass", label: ["Create", "Class"] },
];

function WidgetCell({ w }: { w: Widget }) {
  return (
    <div className="flex h-[168px] w-[136px] shrink-0 flex-col items-center pt-4">
      <svg className="size-[72px] shrink-0 overflow-visible" viewBox="0 0 72 72">
        {icons[w.icon]}
      </svg>
      <div className="mt-[23px] flex h-12 flex-col justify-center text-center text-[20px] leading-[24px] tracking-[0.25px] whitespace-nowrap text-[#2b2b2b]">
        {w.label.map((l) => (
          <span key={l}>{l}</span>
        ))}
      </div>
    </div>
  );
}

function Category({ name, tile, icon }: { name: string; tile: string; icon: ReactNode }) {
  return (
    <div className="flex h-[60px] shrink-0 items-stretch border-b border-[#a4a4a4] bg-linear-to-b from-[#efefef] to-[#e4e4e4]">
      <div className={"flex w-[74px] items-center justify-center border-r border-[#9c9c9c] " + tile}>
        <svg className="ml-[2px] size-[46px] overflow-visible" viewBox="0 0 48 48">
          {icon}
        </svg>
      </div>
      <span className="ml-[20px] self-center text-[26px] text-[#262626]">{name}</span>
    </div>
  );
}

const vizIcon = (
  <>
    <path d="M4 1v43h42" fill="none" stroke={INK} strokeWidth="2.500" />
    <g fill={INK}>
      <circle cx="13" cy="33" r="4.800" />
      <circle cx="24" cy="31.500" r="4.800" />
      <circle cx="26" cy="16" r="4.800" />
    </g>
    <g fill="#7c6460">
      <circle cx="18.500" cy="23" r="4.800" />
      <circle cx="32.500" cy="25" r="4.800" />
      <circle cx="38" cy="15" r="4.800" />
    </g>
  </>
);

const modelIcon = (
  <>
    <path d="M5 13V5h38v8M24 0v13M24 22v8M15 36v-6h18v6" fill="none" stroke={INK} strokeWidth="2.600" />
    <rect x="19.500" y="13" width="9" height="9" fill={INK} />
    <circle cx="5" cy="18" r="4.800" fill="#7a6670" />
    <circle cx="43" cy="18" r="4.800" fill={INK} />
    <circle cx="15" cy="41.500" r="4.800" fill={INK} />
    <circle cx="33.500" cy="41.500" r="4.800" fill="#7a6670" />
  </>
);

const evalIcon = (
  <>
    <path d="M15 1v44M1 14h46" fill="none" stroke={INK} strokeWidth="2.600" />
    <path d="M21 6l4 4 6-8M36 2l8 8M44 2l-8 8M2 25l4 4 6-8M3 33l8 8M11 33l-8 8" fill="none" stroke={INK} strokeWidth="2.800" />
    <circle cx="26" cy="25" r="5" fill={INK} />
    <circle cx="41" cy="25" r="5" fill="#66807f" />
    <circle cx="26" cy="38" r="5" fill="#66807f" />
    <circle cx="41" cy="38" r="5" fill={INK} />
  </>
);

const unsupIcon = (
  <>
    {[[14, 8], [24, 12], [32, 7], [38, 15], [10, 18], [20, 21], [30, 21]].map(([x, y]) => (
      <circle key={x + "," + y} cx={x} cy={y} r="4.600" fill={INK} />
    ))}
    {[[17, 31], [27, 30], [9, 36], [35, 35], [19, 41], [28, 41]].map(([x, y]) => (
      <circle key={x + "," + y} cx={x} cy={y} r="4.400" fill="#6c7a82" />
    ))}
  </>
);

const geoIcon = (
  <g fill="none" stroke="#23362a" strokeWidth="2.600">
    <circle cx="24" cy="24" r="20" />
    <ellipse cx="24" cy="24" rx="10" ry="20" />
    <path d="M24 4v40M4 24h40M8 13h32M8 35h32" />
  </g>
);

type Tool = { id: string; cell: string; art: ReactNode };

const tools: Tool[] = [
  {
    id: "info", cell: "w-[98px]",
    art: (
      <>
        <path d="M10 5h16l8 8v26H10z" fill="none" stroke="#fff" strokeWidth="2.600" />
        <path d="M25 4v10h10z" fill="#fff" />
        <text x="22" y="35" fontSize="26" fontWeight="700" textAnchor="middle" fill="#fff" fontFamily="DejaVu Serif, serif">i</text>
      </>
    ),
  },
  {
    id: "grid", cell: "w-[96px]",
    art: (
      <g fill="none" stroke="#fff" strokeWidth="4">
        <path d="M15 4v36M29 4v36M4 15h36M4 29h36" />
        <circle cx="15" cy="15" r="3" />
        <circle cx="29" cy="15" r="3" />
        <circle cx="15" cy="29" r="3" />
        <circle cx="29" cy="29" r="3" />
      </g>
    ),
  },
  {
    id: "text", cell: "w-[98px]",
    art: <path d="M4 3h36v11h-4.500l-2-5.500H26.500V37l5.500 1.500V42H12v-3.500l5.500-1.500V8.500h-7l-2 5.500H4z" fill="#fff" />,
  },
  { id: "arrow", cell: "w-[96px]", art: <path d="M28 2l11 8-22 23 2 2-15 7 5-16 2 2z" fill="#fff" /> },
  { id: "pause", cell: "w-[96px]", art: <path d="M8 4h10v36H8zM26 4h11v36H26z" fill="#fff" /> },
  {
    id: "help", cell: "w-[94px]",
    art: (
      <>
        <circle cx="22" cy="22" r="17" fill="none" stroke="#fff" strokeWidth="2.600" />
        <text x="22" y="31" fontSize="25" fontWeight="700" textAnchor="middle" fill="#fff">?</text>
      </>
    ),
  },
];

function Sidebar() {
  return (
    <aside className="relative flex h-[2100px] w-[580px] shrink-0 flex-col overflow-hidden border-r-4 border-[#b9c0c3] bg-[#f1f1f1]">
      <div className="flex h-8 shrink-0 items-start bg-linear-to-b from-[#818181] to-[#636363]">
        <svg width="26" height="20" viewBox="0 0 26 20" className="mt-[3px] ml-[6px]" fill="none">
          <path d="M13 2L3 11l10 9M24 2L14 11l10 9" stroke="#c8c8c8" strokeWidth="3" />
          <path d="M13 0L3 9l10 9M24 0L14 9l10 9" stroke="#4c4c4c" strokeWidth="3" />
        </svg>
      </div>
      <div className="flex h-[46px] shrink-0 flex-col border-t-2 border-[#b4bbbf] bg-[#e9eef1] p-[2px] pb-[3px]">
        <div className="flex h-full items-center border border-b-2 border-[#aab4ba] bg-white">
          <svg width="26" height="26" viewBox="0 0 26 26" className="mb-[2px] ml-[15px]" fill="none" stroke="#1c1c1c">
            <circle cx="10" cy="10" r="7.500" strokeWidth="3" />
            <path d="M15.500 15.500L23 23" strokeWidth="4" strokeLinecap="round" />
          </svg>
          <span className="mt-[5px] ml-[14px] text-[25px] text-[#b9b9b9]">Filter...</span>
        </div>
      </div>
      <div className="flex h-[1944px] shrink-0 overflow-hidden pl-[2px]">
        <div className="flex w-[544px] shrink-0 flex-col">
          <div className="flex h-[60px] shrink-0 items-center border-y border-[#b08a60] bg-linear-to-b from-[#ffcf96] from-50% to-[#f6bf88]">
            <svg className="ml-[14px] size-12" viewBox="0 0 72 72">
              <TableArt />
            </svg>
            <span className="mt-[2px] ml-[31px] text-[26px] text-black">Data</span>
          </div>
          <div className="grid shrink-0 grid-cols-4">
            {dataWidgets.map((w) => (
              <WidgetCell key={w.icon} w={w} />
            ))}
          </div>
          <div className="flex h-[60px] shrink-0 items-center border-y border-[#a87a58] bg-linear-to-b from-[#ff984f] to-[#fd8b49]">
            <svg className="ml-[19px] size-[39px]" viewBox="0 0 39 39">
              <rect width="39" height="39" fill={INK} />
              <rect x="2" y="9" width="35" height="28" fill="#fff" />
              <path d="M7 22c1 6 5 9 10 9M32 23c-1-6-5-9-10-9" fill="none" stroke="#000" strokeWidth="3" />
              <path d="M24 33l-9 1 1-8zM15 12l9-1-1 8z" fill="#000" />
            </svg>
            <span className="mt-[2px] ml-[36px] text-[26px] tracking-[-0.25px] text-black">Transform</span>
          </div>
          <div className="grid shrink-0 grid-cols-4">
            {transformWidgets.map((w) => (
              <WidgetCell key={w.icon} w={w} />
            ))}
          </div>
          {transformColumn.map((w) => (
            <WidgetCell key={w.icon} w={w} />
          ))}
          <div className="flex shrink-0 flex-col border-t border-[#a4a4a4]">
            <Category name="Visualize" tile="bg-[#fb9d97]" icon={vizIcon} />
            <Category name="Model" tile="bg-[#f4acca]" icon={modelIcon} />
            <Category name="Evaluate" tile="bg-[#a4e2df]" icon={evalIcon} />
            <Category name="Unsupervised" tile="bg-[#b9d8e8]" icon={unsupIcon} />
            <Category name="Geo" tile="bg-[#80e392]" icon={geoIcon} />
            <Category name="" tile="bg-[#acff80]" icon={<circle cx="16" cy="7" r="5" fill={INK} />} />
          </div>
        </div>
        <div className="flex w-[28px] shrink-0 justify-center border-l-2 border-[#e6e6e6] bg-[#fafafa] pt-[6px]">
          <div className="h-[1130px] w-4 rounded-full bg-[#7e7e7e]" />
        </div>
      </div>
      <div className="h-5 shrink-0 border-y-4 border-[#b9c0c3] bg-[#f7f7f7]" />
      <div className="flex h-[54px] shrink-0 bg-linear-to-b from-[#7a7a7a] to-[#606060]">
        {tools.map((t) => (
          <div key={t.id} className={"flex shrink-0 items-center justify-center border-r-2 border-[#9a9a9a] " + t.cell}>
            <svg className="size-11 overflow-visible" viewBox="0 0 44 44">
              {t.art}
            </svg>
          </div>
        ))}
      </div>
      <div className="grow bg-[#dcdcdc]" />
      <div className="pointer-events-none absolute top-8 left-0 h-[2014px] w-[44px] bg-linear-to-r from-black/12 to-transparent" />
    </aside>
  );
}

/* ------------------------------------------------------------------ */
/* Workflow canvas                                                     */
/* ------------------------------------------------------------------ */

const WIRE = "#9aaeb8";

type Pt = [number, number];
const links: { a: Pt; b: Pt; label: string }[] = [
  { a: [1011, 403.5], b: [1180, 228], label: "Data" },
  { a: [1017, 422], b: [1328, 390], label: "Data" },
  { a: [1017, 442], b: [1814, 621.5], label: "Data" },
  { a: [1011, 460], b: [1514, 1000], label: "Data" },
  { a: [1638, 1000], b: [1814, 654.5], label: "Features" },
];

function arc(cx: number, cy: number, side: 1 | -1, deg: number) {
  const r = 62;
  const dx = Math.cos((deg * Math.PI) / 180) * r * side;
  const dy = Math.sin((deg * Math.PI) / 180) * r;
  return `M${cx + dx} ${cy - dy}A${r} ${r} 0 0 ${side === 1 ? 1 : 0} ${cx + dx} ${cy + dy}`;
}

function Node({
  x, y, name, kind, input, output, children,
}: {
  x: number; y: number; name: string; kind: "data" | "viz" | "unsup"; input?: boolean; output?: "solid" | "dashed"; children: ReactNode;
}) {
  return (
    <g>
      {kind === "unsup" && <circle cx={x} cy={y} r="51" fill="#9fd0ff" opacity=".65" filter="url(#glow)" />}
      <circle cx={x} cy={y} r="48" fill={`url(#${kind})`} />
      {input && <path d={arc(x, y, -1, 46)} fill="none" stroke={WIRE} strokeWidth="6" strokeLinecap="round" />}
      {output === "solid" && <path d={arc(x, y, 1, 46)} fill="none" stroke={WIRE} strokeWidth="6" strokeLinecap="round" />}
      {output === "dashed" && (
        <path d={arc(x, y, 1, 44.5)} fill="none" stroke="#ccd6db" strokeWidth="6" strokeLinecap="round" strokeDasharray="4 14.460" />
      )}
      {children}
      {name === "Correlations" && <rect x={x - 73} y={y + 70} width="146" height="37" rx="6" fill="#cecece" />}
      <text x={x} y={y + 98} fontSize="24" textAnchor="middle" fill="#1c1c1c">
        {name}
      </text>
    </g>
  );
}

function WorkflowCanvas() {
  return (
    <svg className="h-[2096px] w-[2796px] shrink-0" viewBox="656 132 2796 2096">
      <defs>
        <radialGradient id="data">
          <stop offset="0" stopColor="#fff0de" />
          <stop offset="1" stopColor="#ffcb8d" />
        </radialGradient>
        <radialGradient id="viz">
          <stop offset="0" stopColor="#ffdfdf" />
          <stop offset="1" stopColor="#ffa9a7" />
        </radialGradient>
        <radialGradient id="unsup">
          <stop offset="0" stopColor="#d6e6f0" />
          <stop offset="0.600" stopColor="#c8e2f0" />
          <stop offset="1" stopColor="#a6d8f0" />
        </radialGradient>
        <filter id="glow">
          <feGaussianBlur stdDeviation="3" />
        </filter>
      </defs>
      {links.map(({ a, b, label }) => {
        const mx = (a[0] + b[0]) / 2;
        const my = (a[1] + b[1]) / 2;
        const ang = (Math.atan2((b[1] - a[1]) * 2, (b[0] - a[0]) * 2 - 240) * 180) / Math.PI;
        return (
          <g key={a.join() + b.join()}>
            <path d={`M${a[0]} ${a[1]}C${a[0] + 120} ${a[1]} ${b[0] - 120} ${b[1]} ${b[0]} ${b[1]}`} fill="none" stroke={WIRE} strokeWidth="4" />
            <text transform={`translate(${mx} ${my}) rotate(${ang})`} y="-12" fontSize="20" textAnchor="middle" fill="#222">
              {label}
            </text>
          </g>
        );
      })}
      <Node x={956} y={432} name="File" kind="data" output="solid">
        <svg x="929" y="405" width="54" height="54" viewBox="0 0 72 72">
          <PageArt />
        </svg>
      </Node>
      <Node x={1242} y={228} name="Data Table" kind="data" input output="dashed">
        <svg x="1215" y="201" width="54" height="54" viewBox="0 0 72 72">
          <TableArt />
        </svg>
      </Node>
      <Node x={1390} y={390} name="Feature Statistics" kind="data" input output="dashed">
        <svg x="1363" y="363" width="54" height="54" viewBox="0 0 72 72" className="overflow-visible">
          <StatBars />
        </svg>
      </Node>
      <Node x={1874} y={638} name="Scatter Plot" kind="viz" input output="dashed">
        <path d="M1848.500 611v53h52" fill="none" stroke="#adadad" strokeWidth="3" />
        <g fill={INK}>
          {[[1857.5, 654], [1872.5, 653], [1865, 645.5], [1881, 642.5], [1869.5, 633.5], [1893.5, 633.5], [1881, 627.5], [1895, 620]].map(([x, y]) => (
            <circle key={x + "," + y} cx={x} cy={y} r="4.600" />
          ))}
        </g>
      </Node>
      <Node x={1576} y={1000} name="Correlations" kind="unsup" input output="solid">
        <g fill={INK}>
          {[[1552, 1014], [1557.5, 999.5], [1572, 1007], [1577, 992], [1591.5, 998.5], [1600, 986]].map(([x, y]) => (
            <circle key={x + "," + y} cx={x} cy={y} r="6.200" />
          ))}
        </g>
      </Node>
      {links.flatMap(({ a, b }) => [a, b]).map((p) => (
        <circle key={"dot" + p.join()} cx={p[0]} cy={p[1]} r="7" fill={WIRE} />
      ))}
    </svg>
  );
}

/* ------------------------------------------------------------------ */
/* Window parts                                                        */
/* ------------------------------------------------------------------ */

function Lights({ live, modified }: { live?: boolean; modified?: boolean }) {
  const base = "flex size-6 items-center justify-center rounded-full border ";
  return (
    <div className="flex gap-4">
      <span className={base + (live ? "border-[#e0443e] bg-[#ff5f57]" : "border-[#b9bab6] bg-[#d0d1cd]")}>
        {modified && <span className="size-2 rounded-full bg-[#555]" />}
      </span>
      <span className={base + (live ? "border-[#dea123] bg-[#febc2e]" : "border-[#b9bab6] bg-[#d0d1cd]")} />
      <span className={base + (live ? "border-[#1aab29] bg-[#28c840]" : "border-[#b9bab6] bg-[#d0d1cd]")} />
    </div>
  );
}

function MainWindow() {
  return (
    <section className="absolute top-[2px] left-[76px] flex h-[2156px] w-[3378px] flex-col overflow-hidden rounded-[20px] bg-white shadow-[0_0_0_2px_#050505,0_10px_50px_rgba(0,0,0,.75)]">
      <div className="relative flex h-14 shrink-0 items-center border-b border-[#d2d2cf] bg-[#ebebe6] pl-[16px]">
        <Lights modified />
        <div className="absolute inset-x-0 flex items-center justify-center text-[25px] text-[#858682]">
          <svg width="14" height="18" viewBox="0 0 14 18" className="mr-[18px]">
            <circle cx="7" cy="9" r="6.500" fill="#dcdcda" stroke="#bdbdba" />
            <circle cx="7" cy="9" r="3.400" fill="#a9a9a6" />
          </svg>
          <span className="font-semibold tracking-[0.850px]">Iris-scatter.ows</span>
        </div>
      </div>
      <div className="flex h-[2100px] border-b-4 border-[#e4e4e4]">
        <Sidebar />
        <WorkflowCanvas />
        <div className="w-[2px] bg-[#c4c4c4]" />
      </div>
    </section>
  );
}

const InIcon = () => (
  <svg width="26" height="28" viewBox="0 0 26 28" fill="none" stroke="#222" strokeWidth="2.200">
    <path d="M8 7V1.500h16.500v25H8V21M0 14h15" />
    <path d="M11 9.500l5 4.500-5 4.500z" fill="#222" strokeWidth="1" />
  </svg>
);

const OutIcon = () => (
  <svg width="26" height="28" viewBox="0 0 26 28" fill="none" stroke="#222" strokeWidth="2.200">
    <path d="M18 7V1.500H1.500v25H18V21M9 14h12" />
    <path d="M18.500 9.500l5 4.500-5 4.500z" fill="#222" strokeWidth="1" />
  </svg>
);

const HelpIcon = () => (
  <svg width="20" height="28" viewBox="0 0 20 28" fill="none" stroke="#333" strokeWidth="1.800" strokeLinejoin="round">
    <path d="M1.500 8.500c0-10 17-10 17 0 0 5.500-6 5.500-6 11h-5c0-8 6-7.500 6-11.500 0-4-7-4-7 .5zM7.500 22.500h5v4.500h-5z" />
  </svg>
);

const DocIcon = () => (
  <svg width="22" height="28" viewBox="0 0 22 28" fill="none" stroke="#333" strokeWidth="2.300">
    <path d="M1.500 1.500h12l7 7v18h-19zM13 2v7h7M5.500 13h11M5.500 17.500h11M5.500 22h11" />
  </svg>
);

function Cursor({ className }: { className: string }) {
  return (
    <svg className={className} width="26" height="40" viewBox="0 0 26 40">
      <path d="M3 3v25l6-5.500 4.500 10.500 4-2-4.500-10h8z" fill="#000" stroke="#fff" strokeWidth="2" strokeLinejoin="round" />
    </svg>
  );
}

/* ------------------------------------------------------------------ */
/* Correlations window                                                 */
/* ------------------------------------------------------------------ */

const correlations = [
  { r: "+0.963", bar: "w-[181px] bg-[#92f400]", a: "petal length", b: "petal width" },
  { r: "+0.872", bar: "w-[165px] bg-[#92f400]", a: "petal length", b: "sepal length" },
  { r: "+0.818", bar: "w-[155px] bg-[#92f400]", a: "petal width", b: "sepal length" },
  { r: "-0.421", bar: "w-[85px] bg-[#00c0ff]", a: "petal length", b: "sepal width" },
  { r: "-0.357", bar: "w-[73px] bg-[#00c0ff]", a: "petal width", b: "sepal width" },
  { r: "-0.109", bar: "w-[29px] bg-[#00c0ff]", a: "sepal length", b: "sepal width" },
];

function CorrelationsWindow() {
  return (
    <section className="absolute top-[910px] left-[174px] flex h-[1046px] w-[1294px] flex-col overflow-hidden rounded-[20px] bg-[#ebebeb] shadow-[0_0_0_1px_rgba(0,0,0,.28),0_36px_80px_rgba(0,0,0,.36),0_0_24px_rgba(0,0,0,.12)]">
      <div className="relative flex h-[57px] shrink-0 items-center border-b-2 border-[#cdcdca] bg-[#f6f7f2] pl-[16px]">
        <Lights live />
        <span className="absolute inset-x-0 pr-[2px] text-center text-[26px] font-bold tracking-[0.150px] text-[#484848]">Correlations</span>
      </div>
      <div className="flex h-[935px] shrink-0 flex-col text-[25px] text-[#1f1f1f]">
        <div className="mt-[20px] ml-[24px] flex h-10 w-[1243px] items-center rounded-[10px] bg-white pr-[3px] pl-4 shadow-[0_1px_2px_rgba(0,0,0,.35)]">
          <span className="mt-[3px]">Pearson correlation</span>
          <span className="ml-auto flex size-8 items-center justify-center rounded-[9px] bg-linear-to-b from-[#1a92ff] to-[#0070fa]">
            <svg width="14" height="22" viewBox="0 0 14 22" fill="none" stroke="#fff" strokeWidth="3" strokeLinecap="round" strokeLinejoin="round">
              <path d="M2 7l5-5 5 5M2 15l5 5 5-5" />
            </svg>
          </span>
        </div>
        <div className="mt-[34px] ml-[22px] flex h-10 w-[1249px] items-center rounded-[10px] bg-white pr-[3px] pl-[17px] shadow-[0_1px_2px_rgba(0,0,0,.35)]">
          <span>(All combinations)</span>
          <span className="ml-auto flex size-8 items-center justify-center rounded-[9px] bg-linear-to-b from-[#1a92ff] to-[#0070fa]">
            <svg width="14" height="10" viewBox="0 0 14 10" fill="none" stroke="#fff" strokeWidth="3" strokeLinecap="round" strokeLinejoin="round">
              <path d="M2 2l5 5.500L12 2" />
            </svg>
          </span>
        </div>
        <div className="mt-[50px] ml-[20px] flex h-10 w-[1254px] items-center border border-b-2 border-[#d6d6d6] border-b-[#b4b4b4] bg-white pl-[1px] text-[#bdbdbd]">
          <span className="mt-[6px] tracking-[0.300px]">Filter ...</span>
        </div>
        <div className="mt-[21px] ml-[18px] flex h-[597px] w-[1257px] border-2 border-t-[#8c8c8c] border-r-[#c4c4c4] border-b-[#c4c4c4] border-l-[#b4b4b4] bg-white">
          <div className="w-[32px] bg-[#ebebeb] text-[22px] text-[#3a3a3a]">
            {correlations.map((c, i) => (
              <div key={c.a + c.b} className={i === 3 ? "mx-[3px] flex h-[60px] items-center justify-center border-b-2 border-[#bcbcbc] pr-[3px] text-[23px] font-bold text-[#222]" : "mx-[3px] flex h-[60px] items-center justify-center border-b-2 border-[#bcbcbc] pr-[3px]"}>
                {i + 1}
              </div>
            ))}
          </div>
          <div className="grow text-black">
            {correlations.map((c, i) => (
              <div key={c.a + c.b} className={i === 3 ? "flex h-[60px] bg-[#004be3] text-white" : "flex h-[60px]"}>
                <div className="flex w-[259px] flex-col pl-[6px]">
                  <span className="mt-[9px] ml-[3px] h-[30px] text-[26px] leading-[30px] tracking-[-0.100px]">{c.r}</span>
                  <span className={"mt-[7px] h-[10px] rounded-[5px] " + c.bar} />
                </div>
                <span className="w-[422px] self-center text-right leading-none tracking-[0.150px]">{c.a}</span>
                <span className="w-[56px] self-center text-center leading-none">:</span>
                <span className="ml-[2px] self-center leading-none tracking-[0.100px]">{c.b}</span>
              </div>
            ))}
          </div>
        </div>
        <div className="mt-[27px] ml-[30px] flex h-10 w-[1234px] items-center justify-center rounded-[10px] bg-[#f5f5f5] text-[#b8b8b8] shadow-[0_1px_2px_rgba(0,0,0,.2)]">
          Finished
        </div>
      </div>
      <div className="flex grow items-center border-t-2 border-[#6e6e6e] bg-linear-to-b from-[#ececec] to-[#b0b0b0] pl-[27px] text-[22px] text-[#111]">
        <HelpIcon />
        <span className="ml-[24px]">
          <DocIcon />
        </span>
        <span className="ml-[26px] h-11 w-[2px] bg-[#333]" />
        <span className="ml-[20px]">
          <InIcon />
        </span>
        <span className="ml-[11px] w-[61px]">150</span>
        <OutIcon />
        <span className="ml-[10px]">150 | 2 | 6</span>
      </div>
    </section>
  );
}

/* ------------------------------------------------------------------ */
/* Scatter plot window                                                 */
/* ------------------------------------------------------------------ */

const samples: [number, number[]][] = [
  [4.4, [1.5]],
  [4.2, [1.4]],
  [4.1, [1.5]],
  [4.0, [1.2]],
  [3.9, [1.3, 1.7]],
  [3.8, [1.5, 1.6, 1.7, 1.9, 6.4, 6.7]],
  [3.7, [1.5]],
  [3.6, [1.0, 1.4, 6.1]],
  [3.5, [1.3, 1.4, 1.5, 1.6]],
  [3.4, [1.4, 1.5, 1.6, 1.7, 1.9, 4.5, 5.4, 5.6]],
  [3.3, [1.4, 1.7, 4.7, 5.7, 6.0]],
  [3.2, [1.2, 1.3, 1.4, 1.6, 4.5, 4.7, 4.8, 5.1, 5.3, 5.7, 5.9, 6.0]],
  [3.1, [1.5, 1.6, 4.4, 4.7, 4.9, 5.1, 5.4, 5.5, 5.6]],
  [3.0, [1.1, 1.3, 1.4, 1.6, 4.1, 4.2, 4.4, 4.5, 4.6, 4.8, 4.9, 5.0, 5.1, 5.2, 5.5, 5.8, 5.9, 6.1, 6.6]],
  [2.9, [1.4, 3.6, 4.2, 4.3, 4.5, 4.6, 4.7, 5.6, 6.3]],
  [2.8, [4.0, 4.1, 4.5, 4.6, 4.7, 4.8, 4.9, 5.1, 5.6, 6.1, 6.7]],
  [2.7, [3.9, 4.1, 4.2, 4.9, 5.1, 5.3]],
  [2.6, [3.5, 4.0, 4.4, 5.6, 6.9]],
  [2.5, [3.0, 3.9, 4.0, 4.5, 4.9, 5.0, 5.8]],
  [2.4, [3.3, 3.7, 3.8]],
  [2.3, [1.3, 3.3, 4.0, 4.4]],
  [2.2, [4.0, 4.5, 5.0]],
  [2.0, [3.5]],
];

const px = (v: number) => 2490 + (v - 1) * 149.5;
const py = (v: number) => 1859 - (v - 2) * 302.1;

function ScatterChart() {
  const vertical = Array.from({ length: 31 }, (_, i) => 10 + i * 2);
  const horizontal = Array.from({ length: 51 }, (_, i) => 195 + i * 5);
  return (
    <svg className="h-[844px] w-[1018px]" viewBox="2378 1114 1018 844">
      {vertical.map((v) => (
        <path
          key={v}
          d={`M${px(v / 10)} 1114V1879`}
          stroke="#000"
          strokeOpacity={v % 20 === 0 ? 0.6 : v % 10 === 0 ? 0.32 : 0.17}
          strokeWidth="2"
        />
      ))}
      {horizontal.map((v) => (
        <path
          key={v}
          d={`M2466 ${py(v / 100)}H3396`}
          stroke="#000"
          strokeOpacity={v % 50 === 0 ? 0.55 : v % 10 === 0 ? 0.27 : 0.15}
          strokeWidth="2"
        />
      ))}
      {samples.flatMap(([y, xs]) =>
        xs.map((x) => (
          <circle key={x + "/" + y} cx={px(x)} cy={py(y)} r="9.200" fill="#666" fillOpacity=".8" stroke="#5a5a5a" strokeOpacity=".6" strokeWidth="1" />
        )),
      )}
      <path d="M2466 1449.300L3396 1643.800" stroke="#484848" strokeWidth="3" />
      <text transform="translate(3260 1593) rotate(11.8)" y="9" fontSize="25.500" textAnchor="middle" fill="#222">
        r = -0.42
      </text>
      <path d="M2466 1114V1880H3396" fill="none" stroke="#222" strokeWidth="2.400" />
      <g fontSize="25.500" fill="#1c1c1c">
        {["4.0", "3.5", "3.0", "2.5", "2.0"].map((t) => (
          <text key={t} x="2457.500" y={py(Number(t)) + 9.3} textAnchor="end">
            {t}
          </text>
        ))}
        {[1, 2, 3, 4, 5, 6, 7].map((t) => (
          <text key={t} x={px(t)} y="1907" textAnchor="middle">
            {t}
          </text>
        ))}
        <text x="2926" y="1951" textAnchor="middle" textLength="141">
          petal length
        </text>
        <text transform="translate(2404 1499.500) rotate(-90)" textAnchor="middle" textLength="134">
          sepal width
        </text>
      </g>
    </svg>
  );
}

function Combo({ label, value }: { label: string; value: string }) {
  return (
    <div className="flex h-[41px] shrink-0 items-center text-black">
      <span className="mt-[2px] w-[128px]">{label}</span>
      <div className="flex h-[41px] w-[396px] items-center rounded-[9px] bg-white pr-[4px] pl-[19px] shadow-[0_1px_2px_rgba(0,0,0,.4)]">
        <span>{value}</span>
        <span className="ml-auto flex h-[33px] w-[33px] items-center justify-center rounded-[8px] shadow-[0_1px_3px_rgba(0,0,0,.35)]">
          <svg width="14" height="10" viewBox="0 0 14 10" fill="none" stroke="#222" strokeWidth="3" strokeLinecap="round" strokeLinejoin="round">
            <path d="M2 2l5 5.500L12 2" />
          </svg>
        </span>
      </div>
    </div>
  );
}

function Check({ label, checked, off }: { label?: string; checked?: boolean; off?: boolean }) {
  return (
    <label className={off ? "flex h-7 shrink-0 items-center text-[#b2b2b2]" : "flex h-7 shrink-0 items-center text-[#222]"}>
      <span className={off ? "flex size-7 items-center justify-center rounded-[6px] border border-[#d8d8d8] bg-[#f3f3f3]" : "flex size-7 items-center justify-center rounded-[6px] border border-[#c6c6c6] bg-white shadow-[0_1px_1px_rgba(0,0,0,.12)]"}>
        {checked && (
          <svg width="20" height="20" viewBox="0 0 20 20" fill="none" stroke="#1a1a1a" strokeWidth="3.400" strokeLinecap="round" strokeLinejoin="round">
            <path d="M2.500 10.500L8 17 17 2.500" />
          </svg>
        )}
      </span>
      {label && <span className="mt-[3px] ml-2 whitespace-nowrap tracking-[0.050px]">{label}</span>}
    </label>
  );
}

function SliderRow({ label, full }: { label: string; full?: boolean }) {
  return (
    <div className="flex h-[52px] shrink-0 items-center text-black">
      <span className="mt-[9px] w-[214px] pl-[28px]">{label}</span>
      <div className="relative flex h-10 w-[326px] items-center">
        <div className={full ? "h-2 w-full rounded-full bg-[#d2d2d2]" : "h-2 w-full rounded-full bg-[#dedede]"} />
        <span className={full ? "absolute right-0 size-10 rounded-full border border-[#d8d8d8] bg-white shadow-[0_1px_3px_rgba(0,0,0,.3)]" : "absolute left-0 size-10 rounded-full border border-[#d8d8d8] bg-white shadow-[0_1px_3px_rgba(0,0,0,.3)]"} />
      </div>
    </div>
  );
}

function ToolButton({ active, className, children }: { active?: boolean; className?: string; children: ReactNode }) {
  return (
    <span className={(active ? "bg-linear-to-b from-[#adadad] to-[#c2c2c2] " : "bg-linear-to-b from-[#e8e8e8] to-[#f8f8f8] ") + "flex size-[60px] items-center justify-center border-2 border-[#acacac] " + (className ?? "")}>
      {children}
    </span>
  );
}

function ScatterWindow() {
  return (
    <section className="absolute top-[966px] left-[1718px] flex h-[990px] w-[1696px] flex-col overflow-hidden rounded-[20px] bg-[#ebebeb] shadow-[0_0_0_1px_rgba(0,0,0,.25),0_24px_44px_rgba(0,0,0,.26),0_0_20px_rgba(0,0,0,.12)]">
      <div className="relative flex h-[58px] shrink-0 items-center border-b-2 border-[#cfcfcb] bg-[#e9eae4] pl-[16px]">
        <Lights />
        <span className="absolute inset-x-0 pr-[3px] pb-[2px] text-center text-[26px] font-bold tracking-[0.400px] text-[#a6a7a2]">Scatter Plot</span>
      </div>
      <div className="flex h-[878px] shrink-0 text-[25px]">
        <div className="flex w-[616px] flex-col pt-[2px]">
          <div className="flex h-[656px] shrink-0 overflow-hidden">
            <div className="flex w-[588px] shrink-0 flex-col">
              <div className="-mt-[44px] ml-[12px] flex h-[332px] w-[566px] shrink-0 flex-col gap-[27px] rounded-[10px] border-2 border-[#dadada] bg-[#e4e4e4] pt-[25px] pl-[12px]">
                <Combo label="Color:" value="(Same color)" />
                <Combo label="Shape:" value="(Same shape)" />
                <Combo label="Size:" value="(Same size)" />
                <Combo label="Label:" value="(No labels)" />
                <div className="-mt-[7px] ml-[125px]">
                  <Check label="Label only selection and subset" />
                </div>
              </div>
              <div className="mt-[15px] flex shrink-0 flex-col">
                <SliderRow label="Symbol size:" />
                <SliderRow label="Opacity:" full />
                <SliderRow label="Jittering:" />
              </div>
              <div className="mt-[11px] ml-[210px]">
                <Check label="Jitter numeric values" />
              </div>
              <div className="mt-[40px] ml-[32px] flex flex-col gap-[14px]">
                <Check label="Show color regions" off />
                <Check label="Show legend" checked />
                <Check label="Show gridlines" checked />
              </div>
            </div>
            <div className="flex w-[28px] justify-center border-l-2 border-[#e6e6e6] bg-[#fafafa] pt-[198px]">
              <div className="h-[353px] w-4 rounded-full bg-[#7e7e7e]" />
            </div>
          </div>
          <div className="flex h-[34px] shrink-0 items-center pt-[10px] pl-[49px] text-[22px] text-black">Zoom/Select</div>
          <div className="ml-[28px] flex h-[89px] w-[573px] shrink-0 items-center gap-4 rounded-[10px] border-2 border-[#dadada] bg-[#e4e4e4] px-[12px] pt-[2px]">
            <ToolButton active>
              <svg width="22" height="34" viewBox="0 0 22 34">
                <path d="M2 2v25l5.500-4.500 4 9 5-2-4-8.500h7z" fill="#c4c4c4" stroke="#222" strokeWidth="2" />
              </svg>
            </ToolButton>
            <ToolButton>
              <svg width="32" height="32" viewBox="0 0 32 32">
                <path d="M8 30c0-6-7-8-7-16 1-3 5-2 6 1L5 6c0-4 4-4 5-1V3c1-3 5-3 6 0 1-3 5-2 5 1 2-2 5-1 5 2v5c3-3 5 0 5 3 0 8-6 9-6 16z" fill="#d8d8d8" stroke="#555" strokeWidth="1.200" />
                <path d="M10.500 4v8M16 3v9M21 4v8M26 8v6" stroke="#666" strokeWidth="1" />
              </svg>
            </ToolButton>
            <ToolButton>
              <svg width="32" height="32" viewBox="0 0 32 32" fill="none">
                <circle cx="13.500" cy="13" r="11.500" fill="#f2f2ee" stroke="#444" strokeWidth="2.600" />
                <path d="M9 18c3 3 7 2 9-2" stroke="#c9c2a8" strokeWidth="2" />
                <path d="M21.500 21l9 9" stroke="#111" strokeWidth="4.500" />
              </svg>
            </ToolButton>
            <ToolButton className="ml-auto">
              <svg width="30" height="26" viewBox="0 0 30 26" fill="none" stroke="#333" strokeWidth="3">
                <path d="M1.500 7V1.500H9M21 1.500h7.500V7M28.500 19v5.500H21M9 24.500H1.500V19" />
              </svg>
            </ToolButton>
          </div>
          <div className="mt-[31px] ml-[32px] flex h-10 items-center gap-[12px]">
            <Check checked />
            <span className="flex h-10 w-[528px] items-center justify-center rounded-[10px] bg-[#f5f5f5] text-[#b8b8b8] shadow-[0_1px_2px_rgba(0,0,0,.2)]">Send Automatically</span>
          </div>
        </div>
        <div className="flex w-[39px] items-center justify-center">
          <svg width="18" height="24" viewBox="0 0 18 24" fill="none" stroke="#9b9b9b" strokeWidth="4" strokeLinecap="round" strokeLinejoin="round" className="mt-[1px]">
            <path d="M4 3l10 9-10 9" />
          </svg>
        </div>
        <div className="mt-[10px] h-[855px] w-[1028px] rounded-[8px] border border-[#dcdcdc] bg-[#e3e3e3] p-[4px] pt-[5px]">
          <div className="bg-white">
            <ScatterChart />
          </div>
        </div>
      </div>
      <div className="flex grow items-center border-t-2 border-[#858585] bg-linear-to-b from-[#f8f8f8] to-[#dfdfdf] pl-[27px] text-[22px] text-[#111]">
        <HelpIcon />
        <svg width="26" height="26" viewBox="0 0 26 26" className="ml-[22px]" fill="none" stroke="#333" strokeWidth="2.200">
          <path d="M1.500 1.500h18l5 5v18h-23zM6 2v7h10V2M12.500 3v4M5.500 24V14h15v10" />
        </svg>
        <span className="ml-[22px]">
          <DocIcon />
        </span>
        <svg width="32" height="26" viewBox="0 0 32 26" className="ml-[18px]">
          <path d="M13 2c9 0 9 6 6 9-1 3 4 2 6 3 1 5-4 10-12 10C6 24 1 19 1 13S6 2 13 2z" fill="#a4a4a4" stroke="#333" strokeWidth="1.500" />
          <circle cx="13" cy="6.500" r="2.400" fill="none" stroke="#444" />
          <circle cx="7" cy="10" r="2.400" fill="none" stroke="#444" />
          <circle cx="7.500" cy="16.500" r="2.400" fill="none" stroke="#444" />
          <circle cx="14" cy="19.500" r="2.400" fill="none" stroke="#444" />
          <path d="M30.500 4L23.500 14" stroke="#222" strokeWidth="2" />
          <path d="M23.500 14c-4-.5-4 3.500-7 4.500 4 2 8.500-.5 7-4.500z" fill="#222" />
        </svg>
        <span className="ml-[22px] h-11 w-[2px] bg-[#333]" />
        <span className="ml-[20px]">
          <InIcon />
        </span>
        <span className="ml-[12px] w-[123px]">150 | - | 2</span>
        <OutIcon />
        <span className="ml-[11px]">- | 150 | 2</span>
      </div>
    </section>
  );
}

export default function App() {
  return (
    <div className="h-[2234px] w-[3456px] overflow-hidden bg-[#5c93b0] font-['Inter',sans-serif]">
      <MenuBar />
      <main className="relative h-[2160px] w-full overflow-hidden">
        <Wallpaper />
        <MainWindow />
        <Dock />
        <ScatterWindow />
        <CorrelationsWindow />
        <Cursor className="absolute top-[757px] left-[2065px]" />
      </main>
    </div>
  );
}
